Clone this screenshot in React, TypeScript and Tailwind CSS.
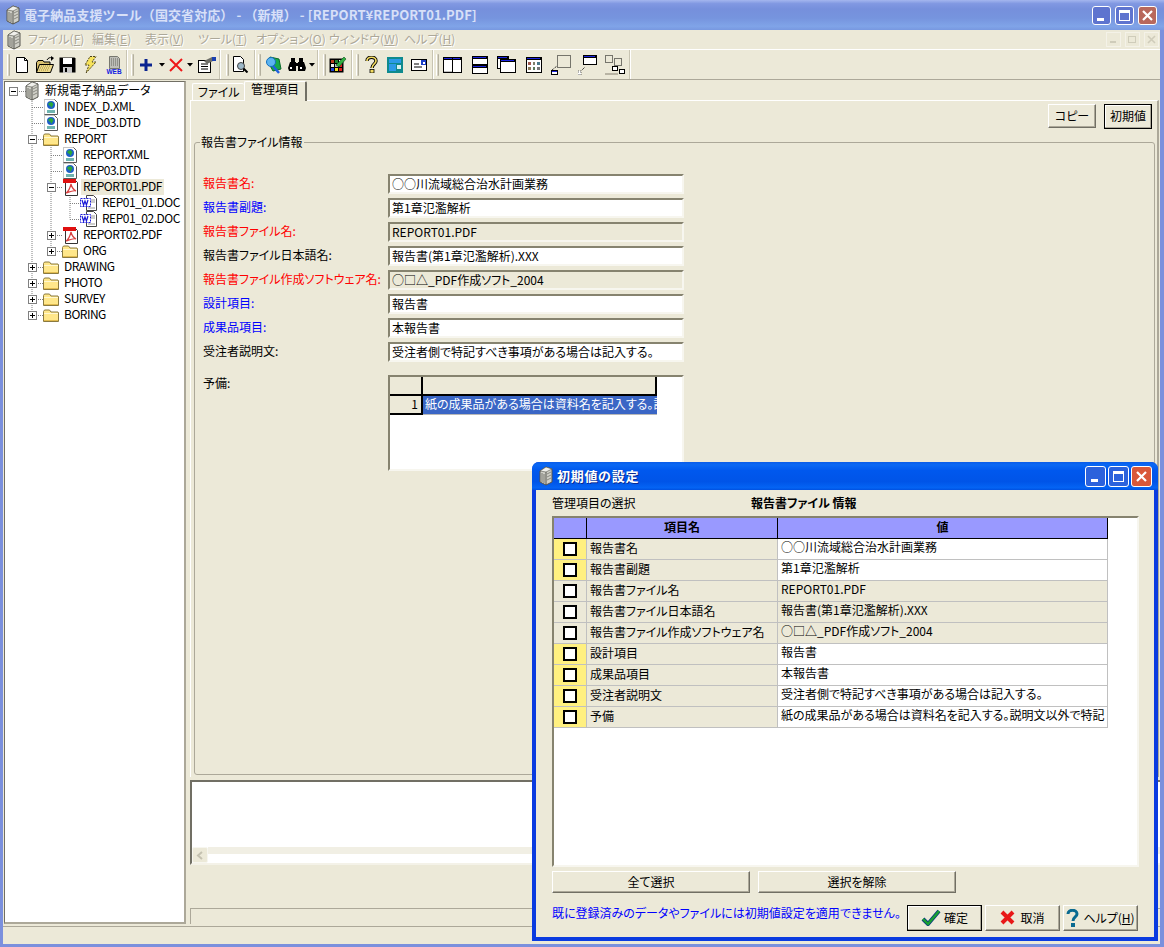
import React from "react";

const FONT = "[font-family:'Noto_Sans_CJK_JP',sans-serif] [font-feature-settings:'palt']";

/* ---------- small drawings ---------- */
const Sv = ({ w, h, children }: { w: number; h: number; children: React.ReactNode }) => (
  <svg width={w} height={h} viewBox={`0 0 ${w} ${h}`} className="block shrink-0">
    {children}
  </svg>
);

const RootIcon = () => (
  <Sv w={16} h={20}>
    <polygon points="2,5 8,1 14,3 14,16 8,19 2,16" fill="#d0d0c8" stroke="#55554e" />
    <polygon points="2,5 8,1 14,3 8,6" fill="#f0f0ec" stroke="#55554e" strokeWidth="0.6" />
    <path d="M4 7v9M6 8v9" stroke="#77776f" />
    <path d="M8 6v13" stroke="#55554e" />
    <path d="M9 8l4-2M9 11l4-2M9 14l4-2" stroke="#8a8a82" />
  </Sv>
);
const WorldDoc = () => (
  <Sv w={16} h={16}>
    <path d="M1.5 .5h10l3 3v12h-13z" fill="#fff" />
    <path d="M1.5 15.5V.5h10" fill="none" stroke="#8a8a8a" strokeDasharray="1 1" />
    <path d="M11.5 .5l3 3v12h-13" fill="none" stroke="#5a5a5a" />
    <circle cx="8" cy="6" r="4" fill="#1e5ec8" />
    <path d="M5.5 4l3-1 2 2-2 4-1-2-2-1z" fill="#2aa838" />
    <rect x="4" y="11" width="8" height="3" fill="#6fb4b0" />
  </Sv>
);
const Folder = () => (
  <Sv w={18} h={16}>
    <path d="M1.5 14.5v-10l1-1.5h5l1.5 2h7l.5 1v8.5z" fill="#ffe78a" stroke="#8a7a40" />
    <path d="M2 6.5h14" stroke="#fff8d0" />
    <path d="M2 13.5h14" stroke="#e2bc50" />
  </Sv>
);
const PdfIcon = () => (
  <Sv w={17} h={17}>
    <path d="M3.5 1.5h10l2 2v13h-12z" fill="#fff" stroke="#333" />
    <rect x="1" y="0" width="13" height="4" fill="#e01010" />
    <path d="M9 5c-1 4-3 8-5 9 3-1 7-3 10-2-2-1-4-3-5-7z" fill="none" stroke="#d84040" strokeWidth="1.2" />
  </Sv>
);
const WordIcon = () => (
  <Sv w={18} h={16}>
    <path d="M6.5 .5h7l3 3v12h-10z" fill="#fff" stroke="#444" />
    <path d="M11 5h4M11 7h4M8 13h7" stroke="#999" />
    <rect x=".5" y="3.5" width="10" height="8" fill="#fff" stroke="#1a1ad8" strokeDasharray="2 1" />
    <path d="M2 5l1.6 5 1.4-4 1.4 4 1.6-5" fill="none" stroke="#1a1ad8" strokeWidth="1.2" />
  </Sv>
);

const Arrow = () => (
  <Sv w={6} h={4}>
    <polygon points="0,0 6,0 3,3.5" fill="#000" />
  </Sv>
);

const TNew = () => (
  <Sv w={14} h={16}>
    <path d="M1.5 .5h8l3 3v12h-11z" fill="#fff" stroke="#000" />
    <path d="M9.5 .5v3h3" fill="none" stroke="#000" />
  </Sv>
);
const TOpen = () => (
  <Sv w={20} h={18}>
    <path d="M1.5 16.5v-10l1.5-2h5l1 1.5h6v10.5z" fill="#d8c070" stroke="#000" />
    <path d="M1.5 16.5l3-8h14l-3 8z" fill="#ecd98c" stroke="#000" />
    <path d="M6 10h10M5 12h10M4 14h10" stroke="#a08a38" strokeDasharray="1 1" />
    <path d="M12 4c1-2 3-3 5-2" fill="none" stroke="#000" />
    <polygon points="16,0 19,2 16,5" fill="#000" />
  </Sv>
);
const TSave = () => (
  <Sv w={17} h={16}>
    <path d="M.5 .5h15l1 1v14h-16z" fill="#000" />
    <rect x="4" y="1" width="9" height="6" fill="#fff" />
    <rect x="4" y="10" width="9" height="6" fill="#c8c8c8" />
    <rect x="6" y="11" width="2" height="4" fill="#000" />
  </Sv>
);
const TFlash = () => (
  <Sv w={13} h={18}>
    <polygon points="6,.5 12,.5 8,6 12,6 2,17 5,9 1,9" fill="#f6e25a" stroke="#4c4420" strokeDasharray="2 1" />
  </Sv>
);
const TWeb = () => (
  <Sv w={18} h={18}>
    <path d="M4.5 .5h8l2 2v10h-10z" fill="#bdbdb8" stroke="#77776f" />
    <path d="M6 3h7M6 5h7M6 7h7M6 9h7" stroke="#66665f" strokeDasharray="1 1" />
    <text x="9" y="17.5" textAnchor="middle" fontSize="6.5" fontWeight="700" fill="#1020e0" fontFamily="Liberation Sans">WEB</text>
  </Sv>
);
const TPlus = () => (
  <Sv w={12} h={12}>
    <path d="M6 0v12M0 6h12" stroke="#0a2490" strokeWidth="3" />
  </Sv>
);
const TCross = () => (
  <Sv w={14} h={14}>
    <path d="M1 1l12 12M13 1L1 13" stroke="#ee1818" strokeWidth="2" />
  </Sv>
);
const TProps = () => (
  <Sv w={18} h={16}>
    <rect x=".5" y="3.5" width="12" height="12" fill="#fff" stroke="#000" />
    <path d="M3 7h7M3 9.5h7M3 12h7" stroke="#000" />
    <polygon points="6,4 14,0 15,4 9,7" fill="#6e6e68" />
    <rect x="14" y="0" width="4" height="4" fill="#1a40b0" />
  </Sv>
);
const TPreview = () => (
  <Sv w={17} h={17}>
    <path d="M1.5 .5h7l3 3v12h-10z" fill="#fff" stroke="#000" />
    <circle cx="9" cy="10" r="3.5" fill="#9db8c8" stroke="#404040" />
    <path d="M11.5 12.5l4 4" stroke="#000" strokeWidth="2" />
  </Sv>
);
const TGlobe = () => (
  <Sv w={17} h={18}>
    <polygon points="5,1 14,3 16,13 8,15 3,6" fill="#16a84a" stroke="#0c6a2c" />
    <circle cx="6" cy="6" r="4.5" fill="#5cb4f0" stroke="#1470c0" />
    <path d="M8 10l6 7" stroke="#2060e0" strokeWidth="2.5" />
  </Sv>
);
const TBino = () => (
  <Sv w={18} h={15}>
    <rect x="3" y="1" width="4" height="4" fill="#000" />
    <rect x="11" y="1" width="4" height="4" fill="#000" />
    <polygon points="2,5 8,5 8,14 1,14 0,11" fill="#000" />
    <polygon points="10,5 16,5 18,11 17,14 10,14" fill="#000" />
    <rect x="8" y="6" width="2" height="3" fill="#000" />
    <rect x="2" y="10" width="2" height="2" fill="#fff" />
    <rect x="12" y="10" width="2" height="2" fill="#fff" />
  </Sv>
);
const TColors = () => (
  <Sv w={18} h={17}>
    <rect x=".5" y="2.5" width="14" height="14" fill="#000" />
    <rect x="2" y="4" width="3" height="3" fill="#b84020" />
    <rect x="6" y="4" width="3" height="3" fill="#208030" />
    <rect x="10" y="4" width="3" height="3" fill="#f0f0f0" />
    <rect x="2" y="8" width="3" height="3" fill="#f0f0f0" />
    <rect x="6" y="8" width="3" height="3" fill="#c0c0c0" />
    <rect x="10" y="8" width="3" height="3" fill="#e02020" />
    <rect x="2" y="12" width="3" height="3" fill="#2040d0" />
    <rect x="6" y="12" width="3" height="3" fill="#f0e020" />
    <rect x="10" y="12" width="3" height="3" fill="#e02020" />
    <path d="M7 9l8-8 2 2-7 8z" fill="#30b040" stroke="#0a5020" strokeWidth=".6" />
  </Sv>
);
const TQuestion = () => (
  <Sv w={13} h={17}>
    <path d="M2 5c0-5 9-5 9 0 0 3-4 3-4 7" fill="none" stroke="#000" strokeWidth="3.4" />
    <path d="M2 5c0-5 9-5 9 0 0 3-4 3-4 7" fill="none" stroke="#f4dc60" strokeWidth="1.6" />
    <rect x="5" y="13.5" width="4" height="3.5" fill="#f4dc60" stroke="#000" strokeWidth=".8" />
  </Sv>
);
const TPanel = () => (
  <Sv w={16} h={16}>
    <rect width="16" height="16" fill="#0f8a8e" />
    <rect x="2" y="2" width="12" height="4" fill="#2c9ae8" />
    <rect x="2" y="7" width="7" height="7" fill="#2c9ae8" />
    <rect x="10" y="8" width="4" height="4" fill="#d8f0f0" />
  </Sv>
);
const TCard = () => (
  <Sv w={16} h={12}>
    <rect x=".5" y=".5" width="15" height="11" fill="#fff" stroke="#000" />
    <rect x="10" y="1" width="5" height="5" fill="#1c40c8" />
    <rect x="12" y="3" width="2" height="2" fill="#fff" />
    <path d="M3 5h5M3 8h8" stroke="#000" />
  </Sv>
);
const Win = ({ x, y, w, h }: { x: number; y: number; w: number; h: number }) => (
  <>
    <rect x={x + 0.5} y={y + 0.5} width={w - 1} height={h - 1} fill="#fff" stroke="#000" />
    <rect x={x} y={y} width={w} height={3} fill="#000" />
    <rect x={x + 1} y={y + 1} width={w - 3} height={1} fill="#1c24e0" />
  </>
);
const L1 = () => (
  <Sv w={19} h={16}>
    <Win x={0} y={0} w={19} h={16} />
    <path d="M9.5 0v16" stroke="#000" />
    <rect x="1" y="14" width="8" height="1" fill="#c0c0c0" />
  </Sv>
);
const L2 = () => (
  <Sv w={16} h={18}>
    <Win x={0} y={0} w={16} h={9} />
    <Win x={0} y={9} w={16} h={9} />
  </Sv>
);
const L3 = () => (
  <Sv w={19} h={17}>
    <Win x={0} y={0} w={12} h={13} />
    <Win x={3} y={3} w={16} h={14} />
  </Sv>
);
const L4 = () => (
  <Sv w={16} h={16}>
    <Win x={0} y={0} w={16} h={16} />
    <rect x="2" y="5" width="3" height="3" fill="#a05a50" />
    <rect x="7" y="5" width="2" height="3" fill="#80806a" />
    <rect x="11" y="5" width="3" height="3" fill="#4a7a8a" />
    <rect x="2" y="10" width="3" height="3" fill="#8a7a5a" />
    <rect x="7" y="10" width="2" height="3" fill="#5a7a5a" />
    <rect x="11" y="10" width="3" height="3" fill="#777" />
  </Sv>
);
const L5 = () => (
  <Sv w={20} h={20}>
    <rect x="6.5" y=".5" width="13" height="12" fill="none" stroke="#000" strokeDasharray="1 1" />
    <path d="M1 15l5-4" stroke="#000" strokeDasharray="1 1" />
    <rect x=".5" y="15.5" width="6" height="4" fill="#fff" stroke="#000" />
    <rect x="1" y="16" width="5" height="1" fill="#1c24e0" />
  </Sv>
);
const L6 = () => (
  <Sv w={19} h={20}>
    <Win x={5} y={0} w={14} h={10} />
    <path d="M1 18l6-6" stroke="#000" strokeDasharray="1 1" />
    <rect x="0" y="16" width="3" height="4" fill="#fff" stroke="#000" strokeWidth=".6" strokeDasharray="1 1" />
  </Sv>
);
const L7 = () => (
  <Sv w={20} h={20}>
    <rect x=".5" y=".5" width="7" height="7" fill="none" stroke="#000" strokeDasharray="1 1" />
    <rect x="9.5" y="3.5" width="7" height="7" fill="none" stroke="#000" strokeDasharray="1 1" />
    <rect x="7.5" y="11.5" width="5" height="4" fill="#fff" stroke="#000" />
    <rect x="14.5" y="14.5" width="5" height="4" fill="#fff" stroke="#000" />
    <rect x="0" y="18" width="13" height="2" fill="#b8b4a4" />
  </Sv>
);

const CheckMark = () => (
  <Sv w={20} h={17}>
    <path d="M2 10l5 5L18 2" fill="none" stroke="#0a3a80" strokeWidth="4" />
    <path d="M2 10l5 5L18 2" fill="none" stroke="#18a030" strokeWidth="2.4" />
  </Sv>
);
const RedX = () => (
  <Sv w={15} h={15}>
    <path d="M2 2l11 11M13 2L2 13" stroke="#e81818" strokeWidth="4" />
  </Sv>
);
const BlueQ = () => (
  <Sv w={13} h={18}>
    <path d="M2 5c0-5 9-5 9 0 0 3-4 3-4 7" fill="none" stroke="#0a6a90" strokeWidth="3" />
    <rect x="5" y="14" width="4" height="4" fill="#0a6a90" />
  </Sv>
);

/* ---------- window chrome ---------- */
const CapBtn = ({ kind, active }: { kind: "min" | "max" | "close"; active?: boolean }) => {
  const bg =
    kind === "close"
      ? active
        ? "bg-[#d9583a]"
        : "bg-[#b8685c]"
      : active
        ? "bg-[#2c62dc]"
        : "bg-[#5e74cf]";
  return (
    <div className={`${active ? "w-[21px] h-[21px]" : "w-[19px] h-[19px]"} rounded-[3px] border border-white flex items-center justify-center ${bg}`}>
      <Sv w={13} h={13}>
        {kind === "min" && <rect x="2" y="9" width="7" height="3" fill="#fff" />}
        {kind === "max" && (
          <>
            <rect x="1.5" y="2.5" width="10" height="9" fill="none" stroke="#fff" />
            <rect x="1" y="1" width="11" height="3" fill="#fff" />
          </>
        )}
        {kind === "close" && <path d="M2 2l9 9M11 2l-9 9" stroke="#fff" strokeWidth="2.2" />}
      </Sv>
    </div>
  );
};

const Grip = () => (
  <div className="w-[3px] h-[22px] shrink-0 rounded-[1px] bg-[#d8d4c4] border-l border-white border-r-[#b4b09f] border-r" />
);
const Group = ({ cls, children }: { cls: string; children: React.ReactNode }) => (
  <div className={`flex items-center h-full shrink-0 border-r border-r-[#c8c4b2] shadow-[1px_0_0_#fff] ${cls}`}>
    {children}
  </div>
);
const Tool = ({ cls, children }: { cls: string; children: React.ReactNode }) => (
  <div className={`flex items-center justify-center shrink-0 ${cls}`}>{children}</div>
);

const Btn = ({ cls, def, children }: { cls: string; def?: boolean; children: React.ReactNode }) => (
  <div
    className={`flex items-center justify-center shrink-0 pb-[1px] bg-[#ece9d8] text-black border ${
      def
        ? "border-black shadow-[inset_-1px_-1px_0_#aca899,inset_1px_1px_0_#fff]"
        : "border-t-white border-l-white border-r-[#716f64] border-b-[#716f64] shadow-[inset_-1px_-1px_0_#aca899]"
    } ${cls}`}
  >
    {children}
  </div>
);

/* ---------- data ---------- */
type TreeRow = { pl: string; exp?: "+" | "-"; icon: React.ReactNode; text: string; sel?: boolean; cjk?: boolean };
const tree: TreeRow[] = [
  { pl: "pl-[4px]", exp: "-", icon: <RootIcon />, text: "新規電子納品データ", cjk: true },
  { pl: "pl-[23px]", icon: <WorldDoc />, text: "INDEX_D.XML" },
  { pl: "pl-[23px]", icon: <WorldDoc />, text: "INDE_D03.DTD" },
  { pl: "pl-[23px]", exp: "-", icon: <Folder />, text: "REPORT" },
  { pl: "pl-[42px]", icon: <WorldDoc />, text: "REPORT.XML" },
  { pl: "pl-[42px]", icon: <WorldDoc />, text: "REP03.DTD" },
  { pl: "pl-[42px]", exp: "-", icon: <PdfIcon />, text: "REPORT01.PDF", sel: true },
  { pl: "pl-[61px]", icon: <WordIcon />, text: "REP01_01.DOC" },
  { pl: "pl-[61px]", icon: <WordIcon />, text: "REP01_02.DOC" },
  { pl: "pl-[42px]", exp: "+", icon: <PdfIcon />, text: "REPORT02.PDF" },
  { pl: "pl-[42px]", exp: "+", icon: <Folder />, text: "ORG" },
  { pl: "pl-[23px]", exp: "+", icon: <Folder />, text: "DRAWING" },
  { pl: "pl-[23px]", exp: "+", icon: <Folder />, text: "PHOTO" },
  { pl: "pl-[23px]", exp: "+", icon: <Folder />, text: "SURVEY" },
  { pl: "pl-[23px]", exp: "+", icon: <Folder />, text: "BORING" },
];

const lines = [
  "M8 8.5H22",
  "M27 16V232.5",
  "M27 24.5H38M27 40.5H38",
  "M27 56.5H38M27 184.5H38M27 200.5H38M27 216.5H38M27 232.5H38",
  "M46 64V168.5",
  "M46 72.5H57M46 88.5H57M46 104.5H57M46 152.5H57M46 168.5H57",
  "M65 112V136.5",
  "M65 120.5H76M65 136.5H76",
];

type FormRow = { label: string; color: string; value: string; ro?: boolean };
const form: FormRow[] = [
  { label: "報告書名:", color: "text-[#ff0000]", value: "○○川流域総合治水計画業務" },
  { label: "報告書副題:", color: "text-[#0000ff]", value: "第1章氾濫解析" },
  { label: "報告書ファイル名:", color: "text-[#ff0000]", value: "REPORT01.PDF", ro: true },
  { label: "報告書ファイル日本語名:", color: "text-black", value: "報告書(第1章氾濫解析).XXX" },
  { label: "報告書ファイル作成ソフトウェア名:", color: "text-[#ff0000]", value: "○□△_PDF作成ソフト_2004", ro: true },
  { label: "設計項目:", color: "text-[#0000ff]", value: "報告書" },
  { label: "成果品項目:", color: "text-[#0000ff]", value: "本報告書" },
  { label: "受注者説明文:", color: "text-black", value: "受注者側で特記すべき事項がある場合は記入する。" },
];

type DlgRow = { name: string; value: string; edit: boolean };
const dlg: DlgRow[] = [
  { name: "報告書名", value: "○○川流域総合治水計画業務", edit: true },
  { name: "報告書副題", value: "第1章氾濫解析", edit: true },
  { name: "報告書ファイル名", value: "REPORT01.PDF", edit: false },
  { name: "報告書ファイル日本語名", value: "報告書(第1章氾濫解析).XXX", edit: false },
  { name: "報告書ファイル作成ソフトウェア名", value: "○□△_PDF作成ソフト_2004", edit: false },
  { name: "設計項目", value: "報告書", edit: true },
  { name: "成果品項目", value: "本報告書", edit: true },
  { name: "受注者説明文", value: "受注者側で特記すべき事項がある場合は記入する。", edit: true },
  { name: "予備", value: "紙の成果品がある場合は資料名を記入する。説明文以外で特記", edit: true },
];

const menus: [string, string, string][] = [
  ["ファイル", "F", "w-[64px]"],
  ["編集", "E", "w-[53px]"],
  ["表示", "V", "w-[53px]"],
  ["ツール", "T", "w-[58px]"],
  ["オプション", "O", "w-[73px]"],
  ["ウィンドウ", "W", "w-[75px]"],
  ["ヘルプ", "H", "w-[60px]"],
];

export default function App() {
  return (
    <div className={`relative w-[1164px] h-[947px] overflow-hidden flex flex-col bg-[#7b90dd] text-[12px] leading-[16px] text-black ${FONT}`}>
      {/* title bar */}
      <div className="h-[30px] shrink-0 flex items-center pl-[5px] pr-[7px] bg-[linear-gradient(180deg,#a4b6ee_0%,#8198e2_12%,#7690dc_30%,#7694de_60%,#80a4e8_88%,#7898e0_100%)]">
        <RootIcon />
        <span className="ml-[3px] text-[13px] font-bold text-[#d8e0f8] whitespace-nowrap [font-feature-settings:normal] tracking-[0.09px]">
          電子納品支援ツール（国交省対応） - （新規） - [REPORT¥REPORT01.PDF]
        </span>
        <div className="ml-auto flex gap-[4px]">
          <CapBtn kind="min" />
          <CapBtn kind="max" />
          <CapBtn kind="close" />
        </div>
      </div>

      {/* body */}
      <div className="flex-1 min-h-0 ml-[3px] mr-[4px] mb-[3px] bg-[#ece9d8] flex flex-col">
        {/* menu */}
        <div className="h-[20px] shrink-0 flex items-center border-b border-white pl-[3px] text-[#aca899] [text-shadow:1px_1px_0_#fff]">
          <RootIcon />
          <div className="flex ml-[6px] -mt-[2px]">
            {menus.map(([t, k, w]) => (
              <span key={t} className={`${w} whitespace-nowrap`}>
                {t}(<span className="underline">{k}</span>)
              </span>
            ))}
          </div>
          <div className="ml-auto mr-[1px] flex gap-[4px] text-[#d8d5c5]">
            {[0, 1, 2].map((k) => (
              <div key={k} className="w-[15px] h-[15px] border border-[#f4f2e8] flex items-center justify-center">
                <Sv w={9} h={9}>
                  {k === 0 && <rect x="1" y="6" width="6" height="2" fill="#cfccba" />}
                  {k === 1 && <rect x=".5" y="1.5" width="7" height="6" fill="none" stroke="#cfccba" />}
                  {k === 2 && <path d="M1 1l7 7M8 1L1 8" stroke="#cfccba" strokeWidth="1.6" />}
                </Sv>
              </div>
            ))}
          </div>
        </div>

        {/* toolbar */}
        <div className="h-[30px] shrink-0 flex border-b border-[#aca899]">
          <Group cls="w-[124px] pl-[4px]">
            <Grip />
            <Tool cls="w-[23px]"><TNew /></Tool>
            <Tool cls="w-[23px]"><TOpen /></Tool>
            <Tool cls="w-[23px]"><TSave /></Tool>
            <Tool cls="w-[23px]"><TFlash /></Tool>
            <Tool cls="w-[23px]"><TWeb /></Tool>
          </Group>
          <Group cls="w-[93px] pl-[4px]">
            <Grip />
            <Tool cls="w-[24px]"><TPlus /></Tool>
            <Tool cls="w-[8px]"><Arrow /></Tool>
            <Tool cls="w-[20px]"><TCross /></Tool>
            <Tool cls="w-[8px]"><Arrow /></Tool>
            <Tool cls="w-[26px]"><TProps /></Tool>
          </Group>
          <Group cls="w-[35px] pl-[6px]">
            <Grip />
            <Tool cls="w-[22px]"><TPreview /></Tool>
          </Group>
          <Group cls="w-[63px] pl-[3px]">
            <Grip />
            <Tool cls="w-[24px]"><TGlobe /></Tool>
            <Tool cls="w-[24px]"><TBino /></Tool>
            <Tool cls="w-[6px]"><Arrow /></Tool>
          </Group>
          <Group cls="w-[34px] pl-[5px]">
            <Grip />
            <Tool cls="w-[24px]"><TColors /></Tool>
          </Group>
          <Group cls="w-[81px] pl-[4px]">
            <Grip />
            <Tool cls="w-[24px]"><TQuestion /></Tool>
            <Tool cls="w-[24px]"><TPanel /></Tool>
            <Tool cls="w-[24px]"><TCard /></Tool>
          </Group>
          <Group cls="w-[197px] pl-[3px]">
            <Grip />
            <Tool cls="w-[27px]"><L1 /></Tool>
            <Tool cls="w-[27px]"><L2 /></Tool>
            <Tool cls="w-[27px]"><L3 /></Tool>
            <Tool cls="w-[27px]"><L4 /></Tool>
            <Tool cls="w-[27px]"><L5 /></Tool>
            <Tool cls="w-[27px]"><L6 /></Tool>
            <Tool cls="w-[27px]"><L7 /></Tool>
          </Group>
        </div>

        {/* main */}
        <div className="flex-1 min-h-0 flex pl-[1px] gap-[4px] pt-[1px]">
          {/* tree */}
          <div className="relative w-[182px] h-[843px] shrink-0 bg-white border-t border-l border-[#716f64] border-r-[#aca899] border-b-[#aca899] border-r-2 border-b-2">
            <svg width="170" height="240" className="absolute left-0 top-[1px] block" fill="none">
              {lines.map((d) => (
                <path key={d} d={d} stroke="#808080" strokeDasharray="1 1" />
              ))}
            </svg>
            <div className="relative mt-[1px]">
              {tree.map((r) => (
                <div key={r.text} className={`h-[16px] flex items-center whitespace-nowrap ${r.pl}`}>
                  <div className="w-[9px] h-[9px] shrink-0">
                    {r.exp && (
                      <div className="w-[9px] h-[9px] bg-white border border-[#808080] flex items-center justify-center">
                        <Sv w={7} h={7}>
                          <path d={r.exp === "+" ? "M1 3.5h5M3.5 1v5" : "M1 3.5h5"} stroke="#000" />
                        </Sv>
                      </div>
                    )}
                  </div>
                  <div className="ml-[5px] w-[18px] h-[16px] shrink-0 flex items-center justify-center">{r.icon}</div>
                  <span className={`ml-[2px] px-[2px] h-[16px] leading-[14px] ${r.cjk ? "" : "tracking-[-0.5px]"} ${r.sel ? "bg-[#ece9d8]" : ""}`}>{r.text}</span>
                </div>
              ))}
            </div>
          </div>

          {/* right column */}
          <div className="flex-1 min-w-0 flex flex-col">
            {/* tabs */}
            <div className="h-[19px] shrink-0 flex items-end pl-[2px] whitespace-nowrap">
              <div className="w-[52px] h-[17px] pl-[5px] border-t border-l border-white rounded-t-[2px] leading-[15px]">ファイル</div>
              <div className="w-[63px] h-[20px] pl-[6px] border-t border-l border-white border-r-2 border-r-[#716f64] rounded-t-[2px] bg-[#ece9d8] relative z-[1] -mb-[1px] leading-[14px]">
                管理項目
              </div>
            </div>
            {/* panel */}
            <div className="h-[677px] shrink-0 border-t border-l border-white border-r-2 border-r-[#aca899] flex flex-col mr-[1px]">
              <div className="h-[29px] shrink-0 flex justify-end items-start gap-[8px] pt-[3px] pr-[5px]">
                <Btn cls="w-[48px] h-[24px]">コピー</Btn>
                <Btn cls="w-[48px] h-[25px]" def>初期値</Btn>
              </div>
              <fieldset className="mt-[4px] ml-[3px] mr-[2px] h-[641px] border border-[#aca899] rounded-[3px] pl-[8px]">
                <legend className="-ml-[3px] px-[1px] leading-[16px]">報告書ファイル情報</legend>
                <div className="pt-[24px] flex flex-col gap-[4px]">
                  {form.map((f) => (
                    <div key={f.label} className="flex items-center h-[20px]">
                      <span className={`w-[185px] shrink-0 whitespace-nowrap pb-[2px] ${f.color}`}>{f.label}</span>
                      <div
                        className={`w-[296px] h-[20px] pl-[2px] pb-[1px] flex items-center whitespace-nowrap border-t-2 border-l-2 border-[#86836f] border-r-2 border-b-2 border-r-[#f7f6ef] border-b-[#f7f6ef] ${
                          f.ro ? "bg-[#ece9d8]" : "bg-white"
                        }`}
                      >
                        {f.value}
                      </div>
                    </div>
                  ))}
                </div>
                <div className="flex mt-[13px]">
                  <span className="w-[185px] shrink-0">予備:</span>
                  <div className="w-[296px] h-[96px] bg-white border-t-2 border-l-2 border-[#86836f] border-r-2 border-b-2 border-r-[#f7f6ef] border-b-[#f7f6ef]">
                    <div className="flex h-[19px]">
                      <div className="w-[33px] bg-[#ece9d8] border-r-2 border-b-2 border-black" />
                      <div className="w-[234px] bg-[#ece9d8] border-r-2 border-b-2 border-black" />
                    </div>
                    <div className="flex h-[19px]">
                      <div className="w-[33px] bg-[#ece9d8] border-r-2 border-b-2 border-black text-right pr-[3px]">1</div>
                      <div className="w-[234px] bg-[#3a66c5] text-white pl-[2px] overflow-hidden whitespace-nowrap border-b border-[#b8b8b8]">
                        紙の成果品がある場合は資料名を記入する。説明文以外で特記
                      </div>
                    </div>
                  </div>
                </div>
              </fieldset>
            </div>
            {/* log */}
            <div className="mt-[3px] h-[85px] shrink-0 flex flex-col bg-white border-t-2 border-l-2 border-[#716f64] border-b-2 border-b-[#f4f2e8]">
              <div className="flex-1" />
              <div className="h-[16px] flex shrink-0">
                <div className="w-[16px] h-[16px] shrink-0 bg-[#ece9d8] border border-[#f7f6ef] rounded-[2px] flex items-center justify-center">
                  <Sv w={8} h={9}>
                    <path d="M6 1L2 4.5 6 8" fill="none" stroke="#c4c1b0" strokeWidth="2" />
                  </Sv>
                </div>
                <div className="flex-1 flex flex-col">
                  <div className="h-[7px] bg-[#f1efe4]" />
                </div>
              </div>
            </div>
            <div className="h-[43px] shrink-0" />
            <div className="h-[16px] shrink-0 border-t border-l border-[#aca899]" />
          </div>
        </div>

        {/* status */}
        <div className="h-[18px] shrink-0 border-t border-[#aca899]" />
      </div>

      {/* dialog window */}
      <div className="absolute left-[532px] top-[462px] w-[626px] h-[479px] flex flex-col rounded-t-[7px] bg-[#0a3be0] overflow-hidden">
        <div className="h-[28px] shrink-0 flex items-center pl-[6px] pr-[6px] bg-[linear-gradient(180deg,#0a5ce8_0%,#0a68f4_10%,#0058ee_30%,#0054e8_70%,#0464f4_92%,#0050e0_100%)]">
          <RootIcon />
          <span className="ml-[3px] text-[13px] font-bold text-white [text-shadow:1px_1px_0_#0a2a90] whitespace-nowrap [font-feature-settings:normal] tracking-[0.7px]">
            初期値の設定
          </span>
          <div className="ml-auto flex gap-[2px]">
            <CapBtn kind="min" active />
            <CapBtn kind="max" active />
            <CapBtn kind="close" active />
          </div>
        </div>
        <div className="flex-1 min-h-0 mx-[4px] mb-[4px] bg-[#ece9d8] pl-[16px] pr-[15px] flex flex-col">
          <div className="h-[26px] shrink-0 flex items-center">
            <span className="w-[199px] shrink-0">管理項目の選択</span>
            <span className="font-bold">報告書ファイル 情報</span>
          </div>
          {/* grid box */}
          <div className="h-[351px] shrink-0 bg-white border-t-2 border-l-2 border-[#86836f] border-r-2 border-b-2 border-r-[#f7f6ef] border-b-[#f7f6ef]">
            <div className="grid grid-cols-[33px_191px_330px] w-[554px]">
              <div className="h-[21px] bg-[#9999ff] border-r border-b border-black" />
              <div className="h-[21px] bg-[#9999ff] border-r border-b border-black font-bold flex items-center justify-center pb-[2px]">項目名</div>
              <div className="h-[21px] bg-[#9999ff] border-r border-b border-black font-bold flex items-center justify-center pb-[2px]">値</div>
              {dlg.map((r) => (
                <React.Fragment key={r.name}>
                  <div className={`h-[21px] border-r border-b border-[#c0c0c0] flex items-center justify-center ${r.edit ? "bg-[#fff080]" : "bg-[#ece9d8]"}`}>
                    <div className="w-[14px] h-[14px] border-2 border-black bg-white" />
                  </div>
                  <div className="h-[21px] border-r border-b border-[#c0c0c0] bg-[#ece9d8] pl-[3px] pb-[2px] flex items-center whitespace-nowrap">
                    {r.name}
                  </div>
                  <div className={`h-[21px] border-r border-b border-[#c0c0c0] pl-[3px] whitespace-nowrap overflow-hidden ${r.edit ? "bg-white" : "bg-[#ece9d8]"}`}>
                    {r.value}
                  </div>
                </React.Fragment>
              ))}
            </div>
          </div>
          <div className="mt-[4px] flex gap-[8px]">
            <Btn cls="w-[198px] h-[22px]">全て選択</Btn>
            <Btn cls="w-[198px] h-[22px]">選択を解除</Btn>
          </div>
          <div className="mt-[12px] flex items-center h-[26px]">
            <span className="w-[355px] shrink-0 whitespace-nowrap text-[#0000ff] self-start">
              既に登録済みのデータやファイルには初期値設定を適用できません。
            </span>
            <div className="flex gap-[3px]">
              <Btn cls="w-[75px] h-[26px] gap-[3px]" def><CheckMark />確定</Btn>
              <Btn cls="w-[75px] h-[26px] gap-[5px]"><RedX />取消</Btn>
              <Btn cls="w-[75px] h-[26px] gap-[4px]"><BlueQ /><span>ヘルプ(<span className="underline">H</span>)</span></Btn>
            </div>
          </div>
        </div>
      </div>
    </div>
  );
}
